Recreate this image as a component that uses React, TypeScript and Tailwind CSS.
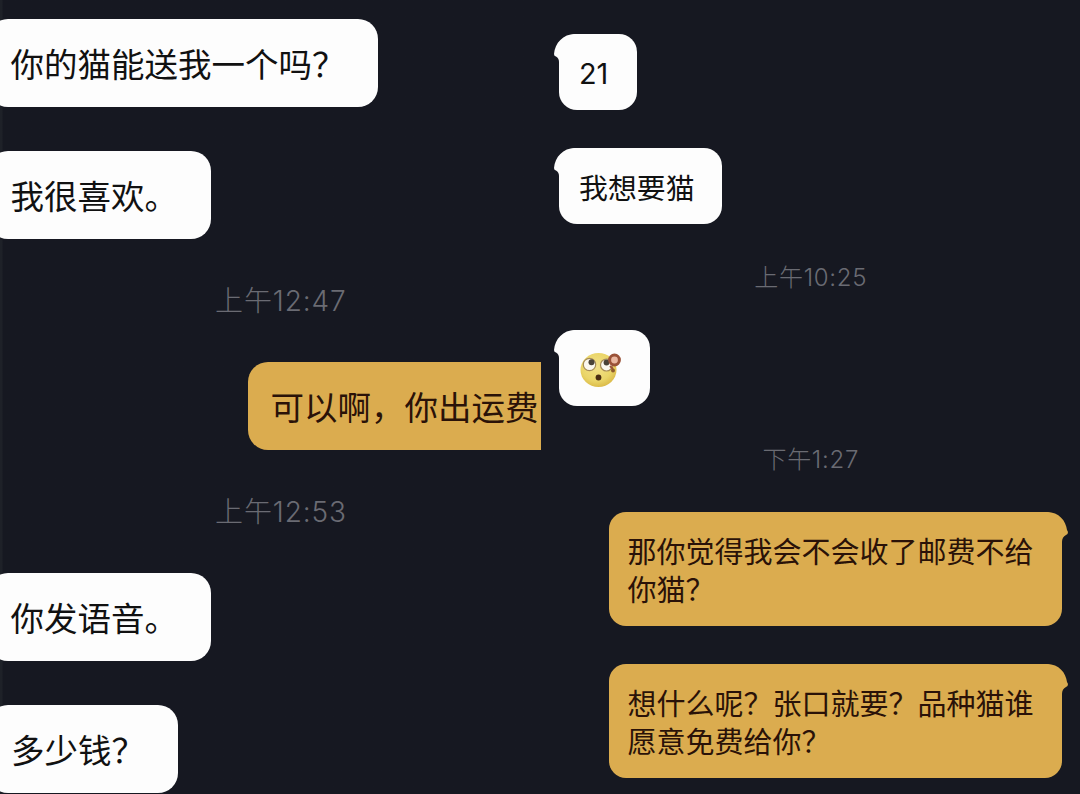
import React from 'react';

const EyeRollEmoji = () => (
  <svg viewBox="0 0 42 38" className="w-[42px] h-[38px]">
    <defs>
      <radialGradient id="face" cx="45%" cy="40%" r="60%">
        <stop offset="0%" stopColor="#f3e08a" />
        <stop offset="70%" stopColor="#ead568" />
        <stop offset="100%" stopColor="#dcbc4a" />
      </radialGradient>
    </defs>
    <ellipse cx="18.500" cy="19" rx="18" ry="17" fill="url(#face)" />
    <circle cx="9.500" cy="13.500" r="6.200" fill="#fbf8ee" stroke="#a58a55" strokeWidth="1.200" />
    <circle cx="26.500" cy="14" r="6" fill="#fbf8ee" stroke="#a58a55" strokeWidth="1.200" />
    <circle cx="11.500" cy="11.300" r="3" fill="#4b4338" />
    <circle cx="26.500" cy="11.500" r="2.900" fill="#4b4338" />
    <ellipse cx="18.500" cy="26.500" rx="2.900" ry="2.900" fill="#4a2c12" />
    <circle cx="34.500" cy="9" r="4.900" fill="#e9b7a0" stroke="#9a5238" strokeWidth="3" />
    <path d="M30 15 L33 18" stroke="#9a5238" strokeWidth="2" />
    <circle cx="33" cy="19.500" r="2" fill="#8d5a2e" />
  </svg>
);

type BubbleProps = {
  className?: string;
  children: React.ReactNode;
};

// Cropped conversation on the left, larger scale
const LargeBubble = ({ className = '', children }: BubbleProps) => (
  <div
    className={`flex h-[88px] shrink-0 items-center pt-[7px] whitespace-nowrap text-[33.5px] leading-none ${className}`}
  >
    {children}
  </div>
);

const Received = ({ className = '', children }: BubbleProps) => (
  <div
    className={`relative ml-[19px] flex h-[76px] shrink-0 items-center rounded-[18px] bg-[#fdfdfd] text-[28.9px] leading-none text-[#111] ${className}`}
  >
    <svg viewBox="0 0 24 28" className="absolute top-0 -left-[5px] w-6 h-7 fill-[#fdfdfd]">
      <path d="M24 0 H21 C9 0 1 9 0 20 Q0 22 2 22.500 Q5 24 5 28 H24 Z" />
    </svg>
    <div className="relative">{children}</div>
  </div>
);

const Sent = ({ className = '', children }: BubbleProps) => (
  <div
    className={`relative ml-[69px] h-[114px] w-[453px] shrink-0 rounded-[17px] bg-[#dbac4f] pl-[18.5px] pt-[22px] text-[29px] leading-[38px] whitespace-nowrap text-[#2a1208] ${className}`}
  >
    <svg viewBox="0 0 24 30" className="absolute top-0 -right-[6px] w-6 h-[30px] fill-[#dbac4f]">
      <path d="M0 0 H3 C15 0 22 9 23 18 L24 20 Q24 22.500 22 23 Q18 25 18 30 H0 Z" />
    </svg>
    {children}
  </div>
);

const App = () => {
  return (
    <div className="flex h-[794px] w-[1080px] overflow-hidden bg-[#161821] font-['Inter','Noto_Sans_CJK_SC',sans-serif]">
      <div className="flex h-full w-[540.5px] flex-col overflow-hidden bg-linear-to-r from-[#1e2128] from-[2px] to-[#161821] to-[3px] pt-[18.5px] text-[#111]">
        <LargeBubble className="-ml-[12px] w-[390px] rounded-[20px] bg-[#fdfdfd] pl-[22.5px]">
          你的猫能送我一个吗？
        </LargeBubble>
        <LargeBubble className="-ml-[12px] mt-[44px] w-[223px] rounded-[20px] bg-[#fdfdfd] pl-[22.5px]">
          我很喜欢。
        </LargeBubble>
        <div className="mt-[42px] ml-[215px] h-[40px] shrink-0 text-[28px] leading-[40px] font-light tracking-[0.9px] text-[#6a6b73]">
          上午12:47
        </div>
        <LargeBubble className="mt-[41px] ml-[248px] w-[320px] rounded-l-[20px] bg-[#dbac4f] pl-[22.5px] text-[#2a1208]">
          可以啊，你出运费
        </LargeBubble>
        <div className="mt-[42px] ml-[215px] h-[40px] shrink-0 text-[28px] leading-[40px] font-light tracking-[0.9px] text-[#6a6b73]">
          上午12:53
        </div>
        <LargeBubble className="-ml-[12px] mt-[41px] w-[223px] rounded-[20px] bg-[#fdfdfd] pl-[22.5px]">
          你发语音。
        </LargeBubble>
        <LargeBubble className="-ml-[12px] mt-[44px] w-[190px] rounded-[20px] bg-[#fdfdfd] pl-[23px]">
          多少钱？
        </LargeBubble>
      </div>

      <div className="flex h-full w-[539.5px] flex-col pt-[34px] -ml-[0.5px]">
        <Received className="w-[78px] pt-[4px] pl-[20px]">21</Received>
        <Received className="mt-[38px] w-[163px] pt-[6px] pl-[20px]">我想要猫</Received>
        <div className="mt-[38px] h-[32px] shrink-0 pl-[2px] text-center text-[24px] leading-[32px] font-light tracking-[0.7px] text-[#6a6b73]">
          上午10:25
        </div>
        <Received className="mt-[36px] w-[91px] pt-[3px] pl-[21px]">
          <EyeRollEmoji />
        </Received>
        <div className="mt-[38px] h-[32px] shrink-0 pl-[2px] text-center text-[24px] leading-[32px] font-light tracking-[0.7px] text-[#6a6b73]">
          下午1:27
        </div>
        <Sent className="mt-[36px]">
          那你觉得我会不会收了邮费不给
          <br />
          你猫？
        </Sent>
        <Sent className="mt-[38px]">
          想什么呢？张口就要？品种猫谁
          <br />
          愿意免费给你？
        </Sent>
      </div>
    </div>
  );
};

export default App;
